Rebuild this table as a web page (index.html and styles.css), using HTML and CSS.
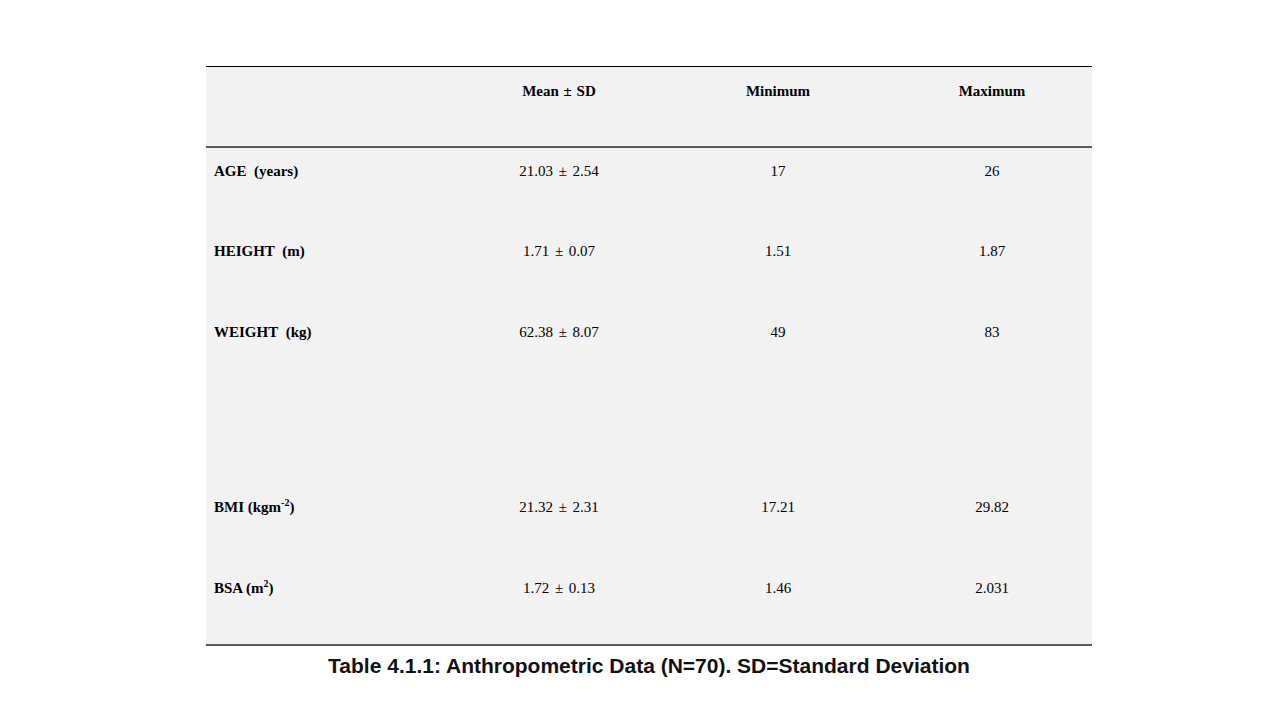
FILE: index.html
```html
<!DOCTYPE html>
<html>
<head>
<meta charset="utf-8">
<link rel="stylesheet" href="styles.css">
</head>
<body>
<div class="slide">
  <table class="data">
    <thead>
      <tr class="head-row">
        <th class="c-label"></th>
        <th class="c-mean">Mean ± SD</th>
        <th class="c-min">Minimum</th>
        <th class="c-max">Maximum</th>
      </tr>
    </thead>
    <tbody>
      <tr class="row">
        <td class="label">AGE&nbsp; (years)</td>
        <td>21.03 ± 2.54</td>
        <td>17</td>
        <td>26</td>
      </tr>
      <tr class="row">
        <td class="label">HEIGHT&nbsp; (m)</td>
        <td>1.71 ± 0.07</td>
        <td>1.51</td>
        <td>1.87</td>
      </tr>
      <tr class="row tall">
        <td class="label">WEIGHT&nbsp; (kg)</td>
        <td>62.38 ± 8.07</td>
        <td>49</td>
        <td>83</td>
      </tr>
      <tr class="row">
        <td class="label">BMI (kgm<sup>-2</sup>)</td>
        <td>21.32 ± 2.31</td>
        <td>17.21</td>
        <td>29.82</td>
      </tr>
      <tr class="row last">
        <td class="label">BSA (m<sup>2</sup>)</td>
        <td>1.72 ± 0.13</td>
        <td>1.46</td>
        <td>2.031</td>
      </tr>
    </tbody>
  </table>
  <p class="caption">Table 4.1.1: Anthropometric Data (N=70). SD=Standard Deviation</p>
</div>
</body>
</html>
```

FILE: styles.css
```css
html, body {
  margin: 0;
  padding: 0;
  background: #ffffff;
}

.slide {
  width: 1280px;
  height: 720px;
  padding-top: 66px;
  box-sizing: border-box;
}

.data {
  margin-left: 206px;
  width: 886px;
  border-collapse: collapse;
  background: #f2f2f2;
  font-family: "Liberation Serif", "Times New Roman", serif;
  font-size: 15px;
  color: #000;
  table-layout: fixed;
  border-top: 1.5px solid #000;
  border-bottom: 2px solid #5a5a5a;
}

.c-label { width: 248px; }
.c-mean { width: 210px; }
.c-min { width: 228px; }
.c-max { width: 200px; }

.head-row {
  height: 80px;
  border-bottom: 2px solid #5a5a5a;
}

.data th {
  font-weight: bold;
  text-align: center;
  vertical-align: top;
  padding: 16px 0 0 0;
  line-height: 17px;
  word-spacing: 1px;
}

.data td {
  text-align: center;
  vertical-align: top;
  padding: 15px 0 0 0;
  line-height: 17px;
  word-spacing: 2px;
}

.row { height: 81px; }
.row.tall { height: 175px; }
.row.last { height: 80px; }

.data td.label {
  text-align: left;
  padding-left: 8px;
  font-weight: bold;
  word-spacing: 0;
}

sup {
  font-size: 10px;
  line-height: 0;
  vertical-align: 6px;
}

.caption {
  margin: 7px 0 0 0;
  width: 886px;
  margin-left: 206px;
  text-align: center;
  font-family: "Liberation Sans", Arial, sans-serif;
  font-weight: bold;
  font-size: 21px;
  line-height: 26px;
  color: #111;
}
```
